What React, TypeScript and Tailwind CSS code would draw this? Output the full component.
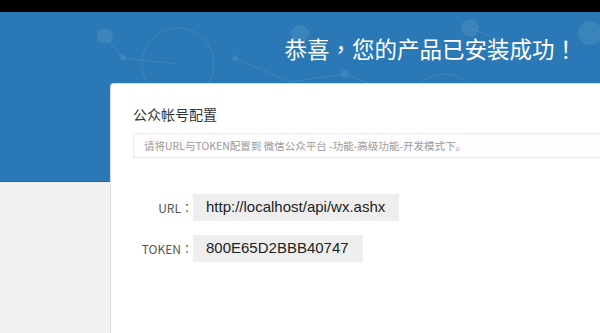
import React from 'react';

const cjk = { fontFamily: '"Microsoft YaHei", "Noto Sans CJK SC", "Liberation Sans", sans-serif' };
// centred full-width punctuation, as on the original page
const cjkTc = { fontFamily: '"Microsoft YaHei", "Noto Sans CJK TC", "Liberation Sans", sans-serif' };
const arial = { fontFamily: '"Liberation Sans", Arial, "Noto Sans CJK SC", sans-serif' };

const HeaderDecor = () => (
  <svg className="absolute inset-0" width="600" height="170" viewBox="0 0 600 170">
    <g stroke="#ffffff" strokeOpacity="0.09" fill="none" strokeWidth="1">
      <circle cx="178" cy="52" r="36" />
      <circle cx="445" cy="100" r="38" />
      <line x1="105" y1="24" x2="123" y2="46" />
      <line x1="123" y1="46" x2="178" y2="52" />
      <line x1="235" y1="46" x2="290" y2="70" />
      <line x1="290" y1="70" x2="345" y2="62" />
      <line x1="345" y1="62" x2="390" y2="80" />
      <line x1="470" y1="16" x2="530" y2="40" />
    </g>
    <g fill="#ffffff" fillOpacity="0.08">
      <circle cx="105" cy="24" r="8" />
      <circle cx="123" cy="46" r="3" />
      <circle cx="300" cy="22" r="9" />
      <circle cx="235" cy="46" r="3" />
      <circle cx="470" cy="16" r="9" />
      <circle cx="590" cy="21" r="12" />
      <circle cx="345" cy="62" r="4" />
    </g>
  </svg>
);

const Field = ({ label, value }: { label: string; value: string }) => (
  <div className="flex items-center">
    <div className="w-[60px] text-right text-[12px] text-[#555]" style={cjkTc}>
      {label}：
    </div>
    <div className="h-[27px] bg-[#eeeeee] pl-[13px] pr-[14px] flex items-center text-[15px] text-[#222]" style={arial}>
      {value}
    </div>
  </div>
);

export default function App() {
  return (
    <div className="w-[600px] h-[333px] overflow-hidden bg-[#f1f1f1]">
      <div className="h-[12px] bg-black" />
      <div className="relative h-[170px] bg-[#2a79b6] border-b border-[#1f6aa3]">
        <HeaderDecor />
        <div className="relative flex justify-end pr-[23px] pt-[21px]">
          <h1 className="text-[22.5px] text-white leading-[30px]" style={cjkTc}>
            恭喜，您的产品已安装成功！
          </h1>
        </div>
      </div>
      <div className="relative -mt-[99px] ml-[110px] w-[520px] h-[260px] bg-white border-l border-t border-[#d9d9d9] rounded-tl-[4px] pl-[22px] pt-[21px]">
        <h2 className="text-[14px] text-[#333] leading-[18px]" style={cjk}>
          公众帐号配置
        </h2>
        <div className="mt-[10px] h-[25px] border border-[#ececec] bg-[#fdfdfd] pl-[10px] flex items-center text-[10.5px] text-[#999]" style={cjk}>
          请将URL与TOKEN配置到 微信公众平台 -功能-高级功能-开发模式下。
        </div>
        <div className="mt-[36px] flex flex-col gap-[14px]">
          <Field label="URL" value="http://localhost/api/wx.ashx" />
          <Field label="TOKEN" value="800E65D2BBB40747" />
        </div>
      </div>
    </div>
  );
}
